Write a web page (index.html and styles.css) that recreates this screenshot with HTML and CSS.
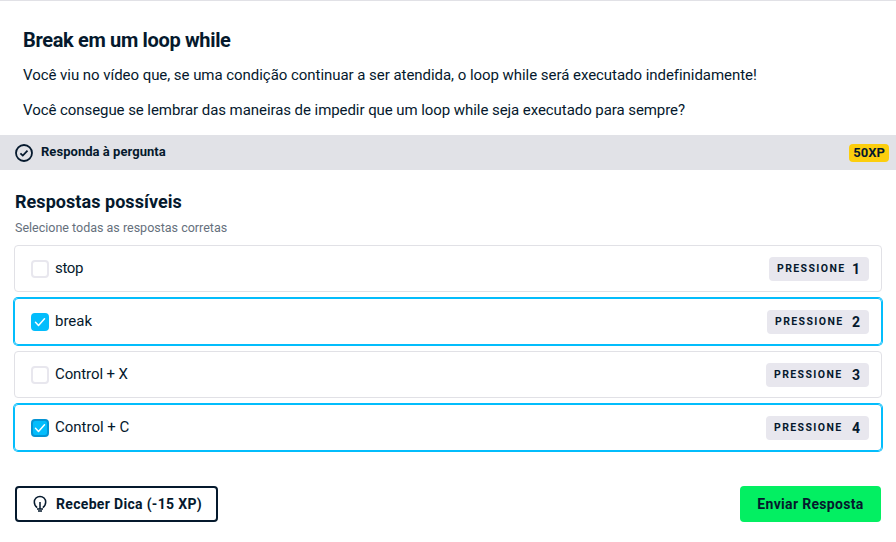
FILE: index.html
```html
<!DOCTYPE html>
<html lang="pt-BR">
<head>
<meta charset="utf-8">
<title>Break em um loop while</title>
<link rel="stylesheet" href="styles.css">
</head>
<body>
<main class="exercise">
  <section class="intro">
    <h1><span class="t-title">Break em um loop while</span></h1>
    <p><span class="t-p1">Você viu no vídeo que, se uma condição continuar a ser atendida, o loop while será executado indefinidamente!</span></p>
    <p><span class="t-p2">Você consegue se lembrar das maneiras de impedir que um loop while seja executado para sempre?</span></p>
  </section>
  <div class="bar">
    <svg class="bar-icon" viewBox="0 0 18 18"><circle cx="9" cy="9" r="8"/><path d="M5.4 9.3l2.4 2.3 4.7-4.9"/></svg>
    <strong class="bar-title">Responda à pergunta</strong>
    <span class="xp">50XP</span>
  </div>
  <section class="answers">
    <h2><span class="t-h2">Respostas possíveis</span></h2>
    <p class="hint"><span class="t-hint">Selecione todas as respostas corretas</span></p>
    <ul class="options">
      <li class="option"><span class="check"></span><span class="label l1">stop</span><span class="key k1"><span class="press">PRESSIONE</span><b>1</b></span></li>
      <li class="option selected"><span class="check"><svg viewBox="0 0 18 18"><path d="M4.5 9.3l3 3.1 6-6.6"/></svg></span><span class="label l2">break</span><span class="key k2"><span class="press">PRESSIONE</span><b>2</b></span></li>
      <li class="option"><span class="check"></span><span class="label l3">Control + X</span><span class="key k3"><span class="press">PRESSIONE</span><b>3</b></span></li>
      <li class="option selected focused"><span class="check"><svg viewBox="0 0 18 18"><path d="M4.5 9.3l3 3.1 6-6.6"/></svg></span><span class="label l4">Control + C</span><span class="key k4"><span class="press">PRESSIONE</span><b>4</b></span></li>
    </ul>
  </section>
  <footer class="actions">
    <button class="btn outline"><svg class="bulb" viewBox="0 0 14 18"><path d="M4.2 12.7C2.4 11.4 1.3 9.6 1.3 7.1a5.7 5.7 0 0 1 11.4 0c0 2.5-1.1 4.3-2.9 5.6M7 7v7M4 14.1h6M5 16h4"/></svg><span class="t-tip">Receber Dica (-15 XP)</span></button>
    <button class="btn submit"><span class="t-send">Enviar Resposta</span></button>
  </footer>
</main>
</body>
</html>
```
FILE: styles.css
```css
* { box-sizing: border-box; }
body { margin: 0; background: #fff; color: #05192d; font-family: Roboto, "Liberation Sans", sans-serif; font-size: 15px; }
h1, h2, p, ul { margin: 0; padding: 0; font-weight: 400; }
.exercise { height: 542px; overflow: hidden; border-top: 1px solid #e1e1e6; }
.intro { height: 134px; padding: 27px 23px 0; white-space: nowrap; }
h1 { font-size: 20px; font-weight: 700; line-height: 24px; margin-bottom: 11px; }
.intro p { line-height: 24px; margin-bottom: 11px; }
.t-title { letter-spacing: -.34px; }
.t-p1 { letter-spacing: -.043px; }
.t-p2 { letter-spacing: -.065px; }
.bar { display: flex; align-items: center; height: 35px; padding: 0 7px 0 15px; background: #e1e2e7; }
.bar-icon { width: 18px; height: 18px; fill: none; stroke: #05192d; stroke-width: 1.8; }
.bar-title { margin: -2px 0 0 8px; font-size: 13px; line-height: 18px; letter-spacing: .04px; }
.xp { margin-left: auto; width: 40px; height: 18px; border-radius: 4px; background: #fcce0d; font-size: 13px; font-weight: 700; line-height: 18px; text-align: center; }
.answers { padding: 20px 14px 0; }
h2 { padding-left: 1px; font-size: 18px; font-weight: 700; line-height: 24px; letter-spacing: .05px; }
.hint { padding-left: 1px; margin: 4px 0 8px; color: #65707c; font-size: 12.5px; line-height: 19px; }
.options { display: grid; gap: 6px; list-style: none; }
.option { display: flex; align-items: center; height: 47px; padding: 0 12px 0 16px; border: 1px solid #e1e1e6; border-radius: 4px; }
.selected { border-color: #03bdfc; box-shadow: 0 0 0 1px #03bdfc; }
.check { width: 18px; height: 18px; margin-top: 1px; border: 2px solid #e8e7ee; border-radius: 4px; }
.selected .check { border-color: #03bdfc; background: #03bdfc; }
.focused .check { border-color: #0494d4; }
.check svg { display: block; width: 18px; height: 18px; margin: -2px; fill: none; stroke: #fff; stroke-width: 1.5; stroke-linecap: round; stroke-linejoin: round; }
.label { margin: -1px 0 0 6px; line-height: 22px; }
.l1 { letter-spacing: -.35px; }
.l3 { letter-spacing: -.1px; }
.key { display: flex; align-items: center; justify-content: space-between; height: 24px; margin: 1px 0 0 auto; padding: 0 9px 0 8px; border-radius: 4px; background: #e8e7ee; }
.press { margin-top: -1px; font-size: 10.5px; font-weight: 700; letter-spacing: 1.4px; }
.key b { margin-top: -1px; font-size: 14px; }
.k1 { width: 100px; }
.k2 { width: 102px; }
.k3, .k4 { width: 103px; }
.actions { display: flex; justify-content: space-between; padding: 35px 15px 0; }
.btn { display: flex; align-items: center; justify-content: center; height: 36px; padding: 0; border: 0; border-radius: 4px; color: #05192d; font: 700 14px/20px Roboto, "Liberation Sans", sans-serif; letter-spacing: .32px; }
.outline { width: 203px; justify-content: flex-start; padding-left: 16px; border: 2px solid #05192d; background: #fff; }
.bulb { width: 14px; height: 18px; margin-right: 9px; fill: none; stroke: #05192d; stroke-width: 1.5; }
.submit { width: 141px; background: #03ef62; }
```
